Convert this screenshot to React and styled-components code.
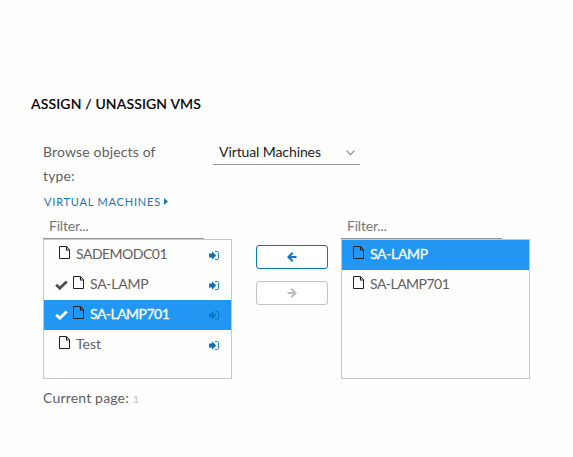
import React from "react";
import styled, { createGlobalStyle } from "styled-components";

const Global = createGlobalStyle`
  * { box-sizing: border-box; }
  body { margin: 0; background: #fefefe; font-family: "Lato", "Open Sans", sans-serif; font-size: 14px; color: #606060; }
`;

const Page = styled.main`
  width: 573px;
  height: 457px;
  overflow: hidden;
  padding: 92px 43px 0;
  background: #fefefe;
`;
const Title = styled.h1`
  margin: 0 0 0 -12px;
  font-size: 14px;
  line-height: 24px;
  font-weight: 500;
  letter-spacing: ${(p) => p.$track}px;
  color: #000;
  -webkit-text-stroke: 0.15px #000;
  white-space: nowrap;
`;
const TypeRow = styled.div`
  display: flex;
  align-items: flex-start;
  margin-top: 24px;
`;
const TypeLabel = styled.label`
  width: 170px;
  line-height: 24px;
  padding-bottom: 1px;
`;
const Text = styled.span`
  letter-spacing: ${(p) => p.$track || 0}px;
  white-space: nowrap;
`;
const Select = styled.div`
  display: flex;
  justify-content: space-between;
  width: 147px;
  height: 25px;
  padding: 0 5px 0 6px;
  line-height: 24px;
  color: #222;
  border-bottom: 1px solid #999;
  svg { margin-top: 10px; }
`;
const Crumb = styled.a`
  display: flex;
  align-items: center;
  height: 20px;
  margin: 2px 0 0 1px;
  font-size: 11px;
  color: #1b75b4;
  gap: 3px;
  svg { margin-top: 1px; }
`;
const Transfer = styled.section`
  display: flex;
  margin-top: 4px;
`;
const Column = styled.div`
  width: 189px;
`;
const Filter = styled.div`
  width: 161px;
  height: 24px;
  padding-left: 6px;
  line-height: 21px;
  color: #777;
  border-bottom: 1px solid #999;
`;
const List = styled.ul`
  height: 140px;
  margin: 0;
  padding: 0;
  list-style: none;
  border: 1px solid #c8c8c8;
`;
const Item = styled.li`
  display: flex;
  height: 30px;
  padding: 0 12px 0 ${(p) => p.$indent}px;
  line-height: 28px;
  color: ${(p) => (p.$active ? "#fff" : "#606060")};
  -webkit-text-stroke: ${(p) => (p.$active ? "0.3px #fff" : "0")};
  background: ${(p) => (p.$active ? "#2196f3" : "transparent")};
  svg { flex: none; }
`;
const Name = styled(Text)`
  flex: 1;
  margin-left: 5px;
`;
const Actions = styled.div`
  display: flex;
  flex-direction: column;
  gap: 12px;
  width: 72px;
  margin: 30px 13px 0 24px;
`;
const MoveButton = styled.button`
  display: flex;
  align-items: center;
  justify-content: center;
  height: 24px;
  padding: 0;
  border: 1px solid ${(p) => (p.disabled ? "#c4c4c4" : "#0d78bf")};
  border-radius: 3px;
  background: #fff;
  color: ${(p) => (p.disabled ? "#bbb" : "#0d78bf")};
`;
const Pager = styled.footer`
  display: flex;
  margin-top: 7px;
  line-height: 24px;
`;
const PageNumber = styled.span`
  margin-left: 4px;
  font-size: 10px;
  line-height: 26px;
  color: #c0c0c0;
`;
const CheckSvg = styled.svg`
  margin: 10px 5px 0 0;
`;
const FileSvg = styled.svg`
  margin-top: 6px;
`;
const EnterSvg = styled.svg`
  margin-top: 11px;
`;

const FileIcon = () => (
  <FileSvg width="12" height="13" viewBox="0 0 12 13" fill="none" stroke="#222">
    <path d="M.5 .5H7.5L10.5 3.8V12.5H.5Z" />
    <path d="M7.5.5V4H10.7" strokeWidth="1.2" />
  </FileSvg>
);
const CheckIcon = ({ active }) => (
  <CheckSvg width="13" height="10" viewBox="0 0 13 10" fill="none">
    <path d="M1.2 4.7 4.8 8.2 11.8 1.4" stroke={active ? "#fff" : "#505050"} strokeWidth="2.8" />
  </CheckSvg>
);
const EnterIcon = ({ active }) => (
  <EnterSvg width="10" height="9" viewBox="0 0 10 9" fill={active ? "#0b79bd" : "#0975b8"}>
    <path d="M0 2.6H3V.3L7.2 4.5 3 8.7V6.4H0Z" />
    <path d="M6 .5H8.2Q9.5.5 9.5 1.7V7.3Q9.5 8.5 8.2 8.5H6" fill="none" stroke={active ? "#0b79bd" : "#2c82c1"} />
  </EnterSvg>
);
const ArrowIcon = ({ right }) => (
  <svg width="10" height="10" viewBox="0 0 10 10" fill="none" stroke="currentColor" strokeWidth="2.1">
    <path d={right ? "M.5 5H8.5M4.4.8 8.5 5 4.4 9.2" : "M9.5 5H1.5M5.6.8 1.5 5 5.6 9.2"} />
  </svg>
);

const available = [
  { name: "SADEMODC01", track: -0.5 },
  { name: "SA-LAMP", track: -0.27, checked: true },
  { name: "SA-LAMP701", track: -0.53, checked: true, active: true },
  { name: "Test", track: 0 },
];
const assigned = [
  { name: "SA-LAMP", track: -0.35, active: true },
  { name: "SA-LAMP701", track: -0.53 },
];

export default function App() {
  return (
    <Page>
      <Global />
      <Title $track={0.14}>ASSIGN / UNASSIGN VMS</Title>
      <TypeRow>
        <TypeLabel>
          <Text $track={0.15}>Browse objects of</Text>
          <br />
          <Text $track={0.15}>type:</Text>
        </TypeLabel>
        <Select>
          <Text $track={-0.1}>Virtual Machines</Text>
          <svg width="9" height="6" viewBox="0 0 9 6" fill="none" stroke="#888" strokeWidth="1.2">
            <path d="M.6.7 4.5 4.7 8.4.7" />
          </svg>
        </Select>
      </TypeRow>
      <Crumb>
        <Text $track={0.8}>VIRTUAL MACHINES</Text>
        <svg width="4" height="7" viewBox="0 0 4 7" fill="currentColor">
          <path d="M0 0 4 3.5 0 7Z" />
        </svg>
      </Crumb>
      <Transfer>
        <Column>
          <Filter><Text $track={-0.2}>Filter...</Text></Filter>
          <List>
            {available.map((v) => (
              <Item key={v.name} $active={v.active} $indent={v.checked ? 11 : 15}>
                {v.checked && <CheckIcon active={v.active} />}
                <FileIcon />
                <Name $track={v.track}>{v.name}</Name>
                <EnterIcon active={v.active} />
              </Item>
            ))}
          </List>
        </Column>
        <Actions>
          <MoveButton aria-label="Unassign"><ArrowIcon /></MoveButton>
          <MoveButton aria-label="Assign" disabled><ArrowIcon right /></MoveButton>
        </Actions>
        <Column>
          <Filter><Text $track={-0.2}>Filter...</Text></Filter>
          <List>
            {assigned.map((v) => (
              <Item key={v.name} $active={v.active} $indent={11}>
                <FileIcon />
                <Name $track={v.track}>{v.name}</Name>
              </Item>
            ))}
          </List>
        </Column>
      </Transfer>
      <Pager>
        <Text $track={0.18}>Current page:</Text>
        <PageNumber>1</PageNumber>
      </Pager>
    </Page>
  );
}
